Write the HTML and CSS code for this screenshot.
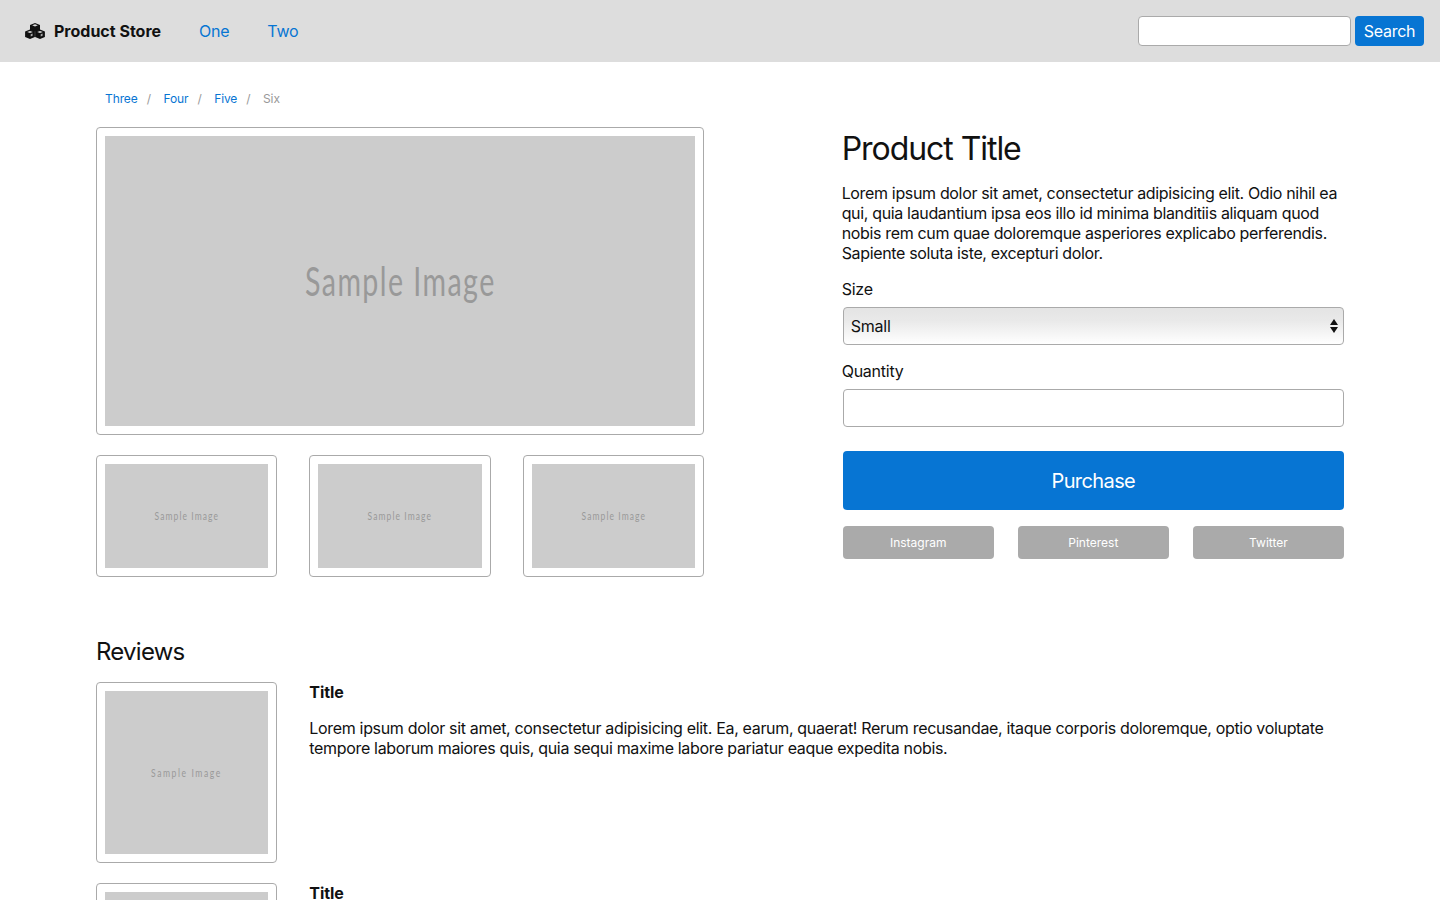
FILE: index.html
```html
<!DOCTYPE html>
<html lang="en">
<head>
<meta charset="utf-8">
<title>Product Store</title>
<link rel="stylesheet" href="styles.css">
</head>
<body>
<nav class="navbar">
  <a class="brand" href="#">
    <svg class="brand-icon" viewBox="0 0 20 16" width="20" height="16" aria-hidden="true">
      <g fill="#111">
        <path d="M10 0l5 1.9v5.2L10 9 5 7.1V1.9z"/>
        <path d="M5 6.6l4.9 1.9v5.5L5 16 .1 14V8.5z"/>
        <path d="M15 6.6l4.9 1.9v5.5L15 16l-4.9-2V8.5z"/>
      </g>
      <g fill="#dcdcdc">
        <path d="M10 1.3l2.8 1-2.8 1.1-2.8-1.1z"/>
        <path d="M5 8l2.8 1-2.8 1.1L2.2 9z"/>
        <path d="M15 8l2.8 1-2.8 1.1-2.8-1.1z"/>
        <path d="M5.7 11.3l1.9-.7v2.2l-1.9.8z" opacity=".75"/>
        <path d="M15.7 11.3l1.9-.7v2.2l-1.9.8z" opacity=".75"/>
      </g>
    </svg>
    <span>Product Store</span>
  </a>
  <a class="nav-link" href="#">One</a>
  <a class="nav-link" href="#">Two</a>
  <form class="search">
    <input class="search-input" type="text" aria-label="Search">
    <button class="btn search-btn" type="button">Search</button>
  </form>
</nav>

<main class="container">
  <ol class="breadcrumb">
    <li><a href="#">Three</a></li>
    <li class="sep">/</li>
    <li><a href="#">Four</a></li>
    <li class="sep">/</li>
    <li><a href="#">Five</a></li>
    <li class="sep">/</li>
    <li class="current">Six</li>
  </ol>

  <section class="grid product">
    <div class="gallery">
      <div class="frame frame-main"><div class="placeholder ph-large"><span>Sample Image</span></div></div>
      <div class="thumbs">
        <div class="frame frame-thumb"><div class="placeholder ph-small"><span>Sample Image</span></div></div>
        <div class="frame frame-thumb"><div class="placeholder ph-small"><span>Sample Image</span></div></div>
        <div class="frame frame-thumb"><div class="placeholder ph-small"><span>Sample Image</span></div></div>
      </div>
    </div>
    <div class="details">
      <h1 class="title">Product Title</h1>
      <p class="lead">Lorem ipsum dolor sit amet, consectetur adipisicing elit. Odio nihil ea qui, quia laudantium ipsa eos illo id minima blanditiis aliquam quod nobis rem cum quae doloremque asperiores explicabo perferendis. Sapiente soluta iste, excepturi dolor.</p>
      <label class="label" for="size">Size</label>
      <div class="select-wrap">
        <select class="select" id="size"><option>Small</option><option>Medium</option><option>Large</option></select>
      </div>
      <label class="label" for="qty">Quantity</label>
      <input class="input" id="qty" type="text">
      <button class="btn purchase" type="button">Purchase</button>
      <div class="social">
        <a class="social-btn" href="#">Instagram</a>
        <a class="social-btn" href="#">Pinterest</a>
        <a class="social-btn" href="#">Twitter</a>
      </div>
    </div>
  </section>

  <section class="reviews">
    <h2 class="reviews-title">Reviews</h2>
    <article class="grid review">
      <div class="frame frame-review"><div class="placeholder ph-review"><span>Sample Image</span></div></div>
      <div class="review-body">
        <h3 class="review-title">Title</h3>
        <p class="review-text">Lorem ipsum dolor sit amet, consectetur adipisicing elit. Ea, earum, quaerat! Rerum recusandae, itaque corporis doloremque, optio voluptate tempore laborum maiores quis, quia sequi maxime labore pariatur eaque expedita nobis.</p>
      </div>
    </article>
    <article class="grid review">
      <div class="frame frame-review"><div class="placeholder ph-review"><span>Sample Image</span></div></div>
      <div class="review-body">
        <h3 class="review-title">Title</h3>
        <p class="review-text">Lorem ipsum dolor sit amet, consectetur adipisicing elit. Ea, earum, quaerat! Rerum recusandae, itaque corporis doloremque, optio voluptate tempore laborum maiores quis, quia sequi maxime labore pariatur eaque expedita nobis.</p>
      </div>
    </article>
  </section>
</main>
</body>
</html>
```

FILE: styles.css
```css
* { box-sizing: border-box; }
html, body { margin: 0; padding: 0; }
body {
  font-family: Inter, "Liberation Sans", sans-serif;
  font-size: 16px;
  line-height: 20px;
  letter-spacing: -0.33px;
  color: #111;
  background: #fff;
}
a { text-decoration: none; color: #0775d3; }

.navbar {
  display: flex;
  align-items: center;
  height: 62px;
  padding: 0 16px 0 25px;
  background: #ddd;
  letter-spacing: -0.25px;
}
.brand {
  display: flex;
  align-items: center;
  gap: 9px;
  margin-right: 38px;
  color: #111;
  font-weight: 700;
  letter-spacing: 0;
}
.brand-icon { display: block; }
.nav-link { margin-right: 38px; }
.search { display: flex; gap: 4px; margin-left: auto; }
.search-input {
  width: 213px;
  height: 30px;
  border: 1px solid #aaa;
  border-radius: 4px;
  background: #fff;
}
.btn {
  border: 0;
  border-radius: 4px;
  background: #0775d3;
  color: #fff;
  font: inherit;
  letter-spacing: inherit;
}
.search-btn { width: 69px; height: 30px; padding: 0; }

.container { width: 1248px; margin: 0 auto; padding-top: 27px; }

.breadcrumb {
  display: flex;
  margin: 0 0 18px;
  padding: 0 0 0 9px;
  list-style: none;
  font-size: 12px;
  line-height: 20px;
  letter-spacing: -0.1px;
}
.breadcrumb .sep { margin: 0 12.5px 0 9px; color: #999; }
.breadcrumb .current { color: #999; }

.grid {
  display: grid;
  grid-template-columns: repeat(12, 1fr);
  column-gap: 32px;
}

.gallery { grid-column: 1 / span 6; }
.details { grid-column: 8 / span 5; }

.frame {
  padding: 8px;
  border: 1px solid #aaa;
  border-radius: 4px;
  background: #fff;
}
.frame-main { height: 308px; }
.frame-thumb { height: 122px; }
.frame-review { grid-column: 1 / span 2; height: 181px; }

.thumbs {
  display: grid;
  grid-template-columns: repeat(3, 1fr);
  gap: 32px;
  margin-top: 20px;
}

.placeholder {
  display: flex;
  align-items: center;
  justify-content: center;
  height: 100%;
  background: #ccc;
  color: #999;
  font-family: Lato, "Liberation Sans", sans-serif;
  white-space: nowrap;
}
.placeholder span { display: inline-block; }
.ph-large { font-size: 40px; letter-spacing: 2px; }
.ph-large span { transform: scaleX(0.715); }
.ph-small { font-size: 11px; letter-spacing: 1.4px; }
.ph-small span { transform: scaleX(0.77); }
.ph-review { font-size: 11px; letter-spacing: 2px; }
.ph-review span { transform: scaleX(0.78); }

.title {
  margin: 2px 0 14px -1px;
  font-size: 32px;
  line-height: 40px;
  font-weight: 400;
  letter-spacing: -1.05px;
}
.lead { margin: 0 0 16px -1px; letter-spacing: -0.34px; }
.label { display: block; margin: 0 0 8px -1px; letter-spacing: -0.25px; }

.select-wrap { position: relative; margin-bottom: 16px; }
.select-wrap::before,
.select-wrap::after {
  content: "";
  position: absolute;
  right: 6px;
  border-left: 4px solid transparent;
  border-right: 4px solid transparent;
  pointer-events: none;
}
.select-wrap::before { top: 12px; border-bottom: 6px solid #111; }
.select-wrap::after { top: 20px; border-top: 6px solid #111; }
.select {
  display: block;
  width: 100%;
  height: 38px;
  padding: 0 7px;
  border: 1px solid #aaa;
  border-radius: 4px;
  background: linear-gradient(#e4e4e4, #e9e9e9 35%, #fff);
  appearance: none;
  color: #111;
  font: inherit;
  letter-spacing: -0.2px;
}
.input {
  display: block;
  width: 100%;
  height: 38px;
  border: 1px solid #aaa;
  border-radius: 4px;
  background: #fff;
}
.purchase {
  display: block;
  width: 100%;
  height: 59px;
  margin-top: 24px;
  font-size: 20px;
  letter-spacing: -0.6px;
}
.social {
  display: grid;
  grid-template-columns: repeat(3, 1fr);
  gap: 24px;
  margin-top: 16px;
}
.social-btn {
  display: block;
  height: 33px;
  border-radius: 4px;
  background: #aaa;
  color: #fff;
  font-size: 12px;
  line-height: 33px;
  text-align: center;
  letter-spacing: 0;
}

.reviews { margin-top: 60px; }
.reviews-title {
  margin: 0 0 15px;
  font-size: 24px;
  line-height: 30px;
  font-weight: 400;
  letter-spacing: -0.75px;
}
.review { margin-bottom: 20px; }
.review-body { grid-column: 3 / span 10; }
.review-title {
  margin: 0 0 16px;
  font-size: 16px;
  line-height: 20px;
  font-weight: 700;
  letter-spacing: -0.1px;
}
.review-text { margin: 0; }
```
